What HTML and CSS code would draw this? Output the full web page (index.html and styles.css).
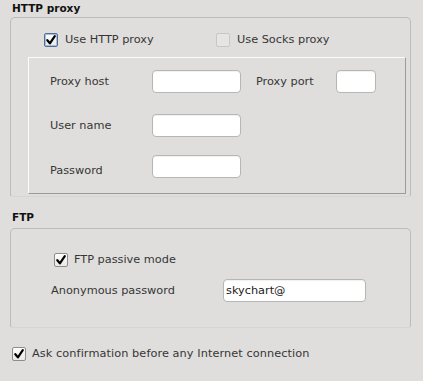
FILE: index.html
```html
<!DOCTYPE html>
<html>
<head>
<meta charset="utf-8">
<link rel="stylesheet" href="styles.css">
</head>
<body>
<div class="page">
  <div class="section-title first">HTTP proxy</div>
  <div class="group http">
    <div class="check-row">
      <label class="opt">
        <span class="box focused"><svg viewBox="0 0 14 14" width="14" height="14"><path d="M3.3 7.2 L5.9 10.3 L10.8 3.2" fill="none" stroke="#000" stroke-width="2.2" stroke-linecap="round" stroke-linejoin="round"/></svg></span>
        <span>Use HTTP proxy</span>
      </label>
      <label class="opt">
        <span class="box disabled"></span>
        <span>Use Socks proxy</span>
      </label>
    </div>
    <div class="panel">
      <div class="form-row">
        <span class="lbl">Proxy host</span>
        <span class="input host"></span>
        <span class="lbl port-lbl">Proxy port</span>
        <span class="input port"></span>
      </div>
      <div class="form-row r2">
        <span class="lbl">User name</span>
        <span class="input host"></span>
      </div>
      <div class="form-row r3">
        <span class="lbl low">Password</span>
        <span class="input host"></span>
      </div>
    </div>
  </div>
  <div class="section-title second">FTP</div>
  <div class="group ftp">
    <div class="check-row ftp-check">
      <label class="opt">
        <span class="box"><svg viewBox="0 0 14 14" width="14" height="14"><path d="M3.3 7.2 L5.9 10.3 L10.8 3.2" fill="none" stroke="#000" stroke-width="2.2" stroke-linecap="round" stroke-linejoin="round"/></svg></span>
        <span>FTP passive mode</span>
      </label>
    </div>
    <div class="anon-row">
      <span class="anon-lbl">Anonymous password</span>
      <span class="input anon">skychart@</span>
    </div>
  </div>
  <div class="check-row bottom-check">
    <label class="opt">
      <span class="box"><svg viewBox="0 0 14 14" width="14" height="14"><path d="M3.3 7.2 L5.9 10.3 L10.8 3.2" fill="none" stroke="#000" stroke-width="2.2" stroke-linecap="round" stroke-linejoin="round"/></svg></span>
      <span class="wide">Ask confirmation before any Internet connection</span>
    </label>
  </div>
</div>
</body>
</html>
```

FILE: styles.css
```css
html, body {
  margin: 0;
  padding: 0;
}
body {
  width: 423px;
  height: 381px;
  background: #dfdedc;
  font-family: "DejaVu Sans", sans-serif;
  font-size: 11.3px;
  color: #363636;
  overflow: hidden;
}
.page {
  display: flex;
  flex-direction: column;
}
.section-title {
  font-weight: bold;
  font-size: 10.5px;
  color: #111;
  padding-left: 12px;
  line-height: 17px;
}
.section-title.first {
  height: 17px;
}
.section-title.second {
  padding-top: 12px;
  height: 19px;
}
.group {
  margin-left: 10px;
  width: 401px;
  box-sizing: border-box;
  border: 1px solid #bdbcba;
  border-bottom-color: #d6d5d3;
  border-radius: 5px 5px 3px 3px;
}
.group.http {
  height: 180px;
}
.group.ftp {
  height: 100px;
}
.check-row {
  display: flex;
  height: 15px;
  align-items: center;
}
.http .check-row {
  margin-top: 14px;
  padding-left: 33px;
}
.opt {
  display: flex;
  align-items: center;
  gap: 7px;
  white-space: nowrap;
}
.http .opt {
  width: 172px;
}
.box {
  width: 14px;
  height: 14px;
  box-sizing: border-box;
  border: 1px solid #8e8d8b;
  border-radius: 2px;
  background: linear-gradient(#fdfdfd, #e9e8e6);
  display: flex;
  align-items: center;
  justify-content: center;
  flex: none;
}
.box svg {
  display: block;
  flex: none;
}
.box.focused {
  border-color: #4d6f99;
  box-shadow: inset 0 0 0 1px #a9bcd6;
}
.box.disabled {
  border-color: #c8c7c5;
  background: #e6e5e3;
}
.panel {
  margin-left: 17px;
  margin-top: 10px;
  width: 378px;
  height: 137px;
  box-sizing: border-box;
  border: 1px solid;
  border-color: #fbfbfb #9c9b99 #9c9b99 #fbfbfb;
  padding: 12px 0 0 21px;
}
.form-row {
  display: flex;
  align-items: center;
  height: 23px;
}
.form-row.r2 {
  margin-top: 21px;
}
.form-row.r3 {
  margin-top: 18px;
}
.lbl {
  width: 102px;
  flex: none;
}
.lbl.low {
  padding-top: 7px;
}
.lbl.port-lbl {
  width: 80px;
  margin-left: 15px;
}
.input {
  display: block;
  height: 23px;
  box-sizing: border-box;
  background: #fff;
  border: 1px solid #b7b6b4;
  border-radius: 4px;
  box-shadow: inset 0 1px 1px rgba(0,0,0,0.06);
  flex: none;
}
.input.host {
  width: 89px;
}
.input.port {
  width: 40px;
}
.ftp-check {
  margin-top: 23px;
  padding-left: 43px;
}
.ftp-check .opt {
  gap: 6px;
}
.anon-row {
  display: flex;
  align-items: center;
  margin-top: 12px;
  padding-left: 40px;
}
.anon-lbl {
  width: 172px;
  flex: none;
}
.input.anon {
  width: 143px;
  line-height: 21px;
  padding-left: 2px;
  color: #222;
}
.bottom-check {
  margin-top: 18px;
  padding-left: 12px;
}
.bottom-check .opt {
  gap: 6px;
}
.wide {
  letter-spacing: 0.08px;
}
```
